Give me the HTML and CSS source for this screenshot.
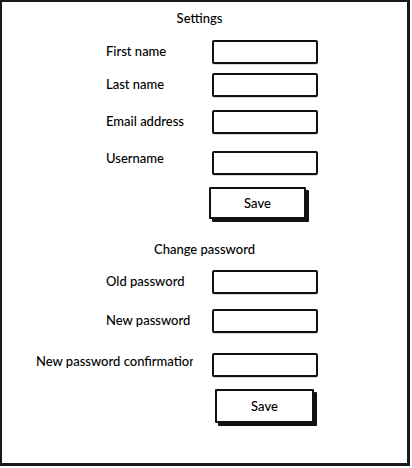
FILE: index.html
```html
<!DOCTYPE html>
<html>
<head>
<meta charset="utf-8">
<link rel="stylesheet" href="styles.css">
</head>
<body>
<div class="frame">
  <div class="title title-settings">Settings</div>
  <div class="row r1"><span class="label">First name</span><span class="input"></span></div>
  <div class="row r2"><span class="label">Last name</span><span class="input"></span></div>
  <div class="row r3"><span class="label">Email address</span><span class="input"></span></div>
  <div class="row r4"><span class="label up5">Username</span><span class="input"></span></div>
  <div class="btn-row b1"><button class="btn">Save</button></div>
  <div class="title title-pass">Change password</div>
  <div class="row r5"><span class="label">Old password</span><span class="input"></span></div>
  <div class="row r6"><span class="label">New password</span><span class="input"></span></div>
  <div class="row r7"><span class="label wide up4">New password confirmation</span><span class="input"></span></div>
  <div class="btn-row b2"><button class="btn btn2">Save</button></div>
</div>
</body>
</html>
```
FILE: styles.css
```css
html, body {
  margin: 0;
  padding: 0;
  background: #fff;
}
body {
  font-family: Lato, "Noto Sans", sans-serif;
  font-size: 13px;
  font-weight: 500;
  color: #000;
}
.frame {
  width: 410px;
  height: 466px;
  box-sizing: border-box;
  border: 2px solid #1a1a1a;
  border-right-width: 3px;
  border-bottom-width: 3px;
  display: flex;
  flex-direction: column;
}
.title {
  line-height: 16px;
  height: 16px;
  text-align: center;
}
.title-settings { margin-top: 8px; padding-right: 10px; }
.title-pass { margin-top: 22px; }
.row {
  display: flex;
  align-items: center;
  height: 24px;
  padding-left: 104px;
}
.r1 { margin-top: 14px; }
.r2 { margin-top: 9px; }
.r3 { margin-top: 13px; }
.r4 { margin-top: 17px; }
.r5 { margin-top: 13px; }
.r6 { margin-top: 15px; }
.r7 { margin-top: 20px; }
.label {
  width: 106px;
  white-space: nowrap;
  line-height: 16px;
  position: relative;
  top: -1px;
}
.label.wide {
  width: 157px;
  margin-left: -70px;
  margin-right: 19px;
  overflow: hidden;
}
.label.up5 { top: -5px; }
.label.up4 { top: -4px; }
.input {
  width: 106px;
  height: 24px;
  box-sizing: border-box;
  border: 2px solid #111;
  border-radius: 2px;
  background: #fff;
  box-shadow: 0 1px 0 rgba(0,0,0,0.15);
}
.btn-row {
  display: flex;
  margin-top: 12px;
}
.b1 { padding-left: 207px; }
.b2 { padding-left: 213px; }
.btn {
  width: 97px;
  height: 32px;
  box-sizing: border-box;
  border: 2px solid #111;
  border-radius: 1px;
  background: #fff;
  box-shadow: 3px 3px 0 #111;
  font-family: Lato, "Noto Sans", sans-serif;
  font-size: 13px;
  font-weight: 500;
  color: #000;
  padding: 0;
}
.btn2 { width: 99px; height: 34px; }
```
